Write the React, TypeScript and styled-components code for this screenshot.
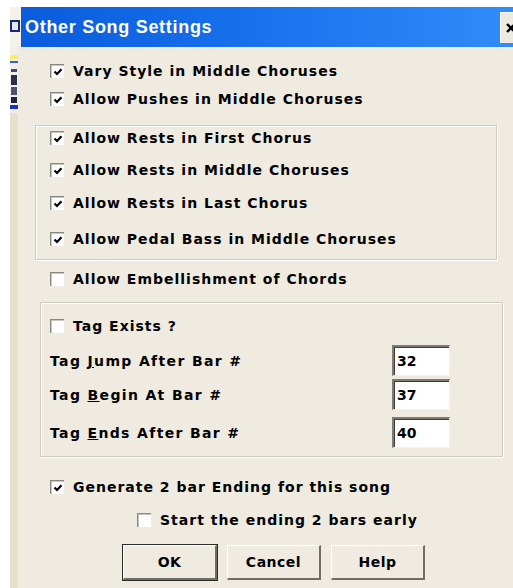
import React from "react";
import styled, { createGlobalStyle } from "styled-components";

const Global = createGlobalStyle`
  html, body {
    margin: 0;
    padding: 0;
    background: #ffffff;
    overflow: hidden;
  }
  body {
    width: 513px;
    height: 588px;
  }
`;

const Window = styled.div`
  margin: 7px 0 0 10px;
  width: 520px;
  height: 581px;
  display: flex;
  flex-direction: column;
  font-family: "DejaVu Sans", "Liberation Sans", Arial, sans-serif;
  color: #000;
`;

const TitleRow = styled.div`
  display: flex;
  height: 40px;
  flex-shrink: 0;
`;

const AppSliver = styled.div`
  width: 11px;
  background: #f3f1ea;
  display: flex;
  align-items: center;
`;

const Caption = styled.div`
  width: 473px;
  padding-left: 4px;
  background: linear-gradient(90deg, #0a5cdb 0%, #1670ec 45%, #2f8afa 100%);
  color: #fff;
  font-family: "Liberation Sans", Arial, sans-serif;
  font-weight: bold;
  font-size: 18px;
  display: flex;
  align-items: center;
  letter-spacing: 0.7px;
`;

const CloseCell = styled.div`
  flex: 1;
  background: #2f8afa;
  display: flex;
  align-items: center;
  padding-left: 2px;
`;

const CloseBox = styled.div`
  width: 24px;
  height: 30px;
  background: #ece9de;
  border-left: 1px solid #ffffff;
  border-top: 1px solid #ffffff;
  display: flex;
  align-items: center;
  padding-left: 4px;
`;

const Body = styled.div`
  flex: 1;
  display: flex;
`;

const LeftEdge = styled.div`
  width: 8px;
  background: #e7e0ca;
  display: flex;
  flex-direction: column;
`;

const Content = styled.div`
  flex: 1;
  background: #efebe1;
  display: flex;
  flex-direction: column;
  font-size: 14px;
  font-weight: bold;
  letter-spacing: 1px;
`;

const CheckRow = styled.label<{ $top: number; $left?: number }>`
  display: flex;
  align-items: center;
  height: 22px;
  margin-top: ${(p) => p.$top}px;
  margin-left: ${(p) => p.$left ?? 0}px;
  gap: 9px;
  white-space: nowrap;
`;

const Box = styled.span`
  width: 14px;
  height: 14px;
  box-sizing: border-box;
  background: #ffffff;
  border-top: 1px solid #8a877c;
  border-left: 1px solid #8a877c;
  box-shadow: inset 1px 1px 0 #c9c6ba;
  display: flex;
  align-items: center;
  justify-content: center;
  flex-shrink: 0;
`;

const Group = styled.div<{ $top: number; $left: number; $width: number; $pad: string }>`
  margin-top: ${(p) => p.$top}px;
  margin-left: ${(p) => p.$left}px;
  width: ${(p) => p.$width}px;
  box-sizing: border-box;
  border: 1px solid #cfcbbd;
  box-shadow: inset 1px 1px 0 #ffffff, 1px 1px 0 #ffffff;
  padding: ${(p) => p.$pad};
  display: flex;
  flex-direction: column;
`;

const FieldRow = styled.div<{ $top: number }>`
  display: grid;
  grid-template-columns: 342px 58px;
  align-items: center;
  height: 31px;
  margin-top: ${(p) => p.$top}px;
`;

const FieldLabel = styled.span`
  letter-spacing: 1.35px;
  white-space: nowrap;
`;

const Field = styled.div`
  height: 31px;
  box-sizing: border-box;
  background: #ffffff;
  border-top: 2px solid #7d7b72;
  border-left: 2px solid #7d7b72;
  border-right: 1px solid #f4f2ea;
  border-bottom: 1px solid #f4f2ea;
  box-shadow: inset 1px 1px 0 #3d3c38;
  display: flex;
  align-items: center;
  padding-left: 3px;
  font-size: 14px;
  letter-spacing: 0;
`;

const ButtonRow = styled.div`
  display: flex;
  gap: 10px;
  margin-top: 14px;
  margin-left: 105px;
`;

const Button = styled.div<{ $default?: boolean }>`
  width: 94px;
  height: 35px;
  box-sizing: border-box;
  background: #efebe1;
  display: flex;
  align-items: center;
  justify-content: center;
  font-size: 14px;
  font-weight: bold;
  letter-spacing: 0.5px;
  border-top: 1px solid #ffffff;
  border-left: 1px solid #ffffff;
  border-right: 2px solid #6f6d66;
  border-bottom: 2px solid #6f6d66;
  box-shadow: ${(p) => (p.$default ? "0 0 0 1px #2a2a2a" : "none")};
`;

const Key = styled.span`
  text-decoration: underline;
`;

const Check = () => (
  <svg width="10" height="10" viewBox="0 0 10 10">
    <path d="M1.5 4.5 L4 7 L8.5 2.2" fill="none" stroke="#000" strokeWidth="2.2" />
  </svg>
);

const CheckBox = ({ on }: { on?: boolean }) => <Box>{on ? <Check /> : null}</Box>;

const Option = ({
  on,
  top,
  left,
  children,
}: {
  on?: boolean;
  top: number;
  left?: number;
  children: React.ReactNode;
}) => (
  <CheckRow $top={top} $left={left}>
    <CheckBox on={on} />
    <span>{children}</span>
  </CheckRow>
);

export default function App() {
  return (
    <>
      <Global />
      <Window>
        <TitleRow>
          <AppSliver>
            <svg width="10" height="14" viewBox="0 0 10 14">
              <rect x="1" y="1" width="8" height="10" fill="#dfe6f5" stroke="#1b2a6b" strokeWidth="2" />
            </svg>
          </AppSliver>
          <Caption>Other Song Settings</Caption>
          <CloseCell>
            <CloseBox>
              <svg width="12" height="12" viewBox="0 0 12 12">
                <path d="M2 2 L10 10 M10 2 L2 10" stroke="#000" strokeWidth="2.4" />
              </svg>
            </CloseBox>
          </CloseCell>
        </TitleRow>
        <Body>
          <LeftEdge>
            <svg width="8" height="66" viewBox="0 0 8 66">
              <rect x="0" y="0" width="8" height="66" fill="#f1efe6" />
              <rect x="0" y="8" width="8" height="4" fill="#f4ee6a" />
              <rect x="0" y="14" width="8" height="2" fill="#3b5fd0" />
              <rect x="1" y="22" width="6" height="3" fill="#3a4a7a" />
              <rect x="1" y="28" width="6" height="10" fill="#27304e" />
              <rect x="1" y="40" width="6" height="8" fill="#4a5370" />
              <rect x="1" y="50" width="6" height="6" fill="#1d2340" />
              <rect x="0" y="58" width="8" height="4" fill="#1432c8" />
            </svg>
          </LeftEdge>
          <Content>
            <Option on top={13} left={32}>Vary Style in Middle Choruses</Option>
            <Option on top={6} left={32}>Allow Pushes in Middle Choruses</Option>

            <Group $top={15} $left={17} $width={462} $pad="1px 0 9px 14px">
              <Option on top={0}>Allow Rests in First Chorus</Option>
              <Option on top={10}>Allow Rests in Middle Choruses</Option>
              <Option on top={11}>Allow Rests in Last Chorus</Option>
              <Option on top={14}>Allow Pedal Bass in Middle Choruses</Option>
            </Group>

            <Option top={8} left={32}>Allow Embellishment of Chords</Option>

            <Group $top={12} $left={22} $width={463} $pad="12px 0 8px 9px">
              <Option top={0}>Tag Exists ?</Option>
              <FieldRow $top={8}>
                <FieldLabel>
                  Tag <Key>J</Key>ump After Bar #
                </FieldLabel>
                <Field>32</Field>
              </FieldRow>
              <FieldRow $top={3}>
                <FieldLabel>
                  Tag <Key>B</Key>egin At Bar #
                </FieldLabel>
                <Field>37</Field>
              </FieldRow>
              <FieldRow $top={7}>
                <FieldLabel>
                  Tag <Key>E</Key>nds After Bar #
                </FieldLabel>
                <Field>40</Field>
              </FieldRow>
            </Group>

            <Option on top={19} left={32}>Generate 2 bar Ending for this song</Option>
            <Option top={11} left={119}>Start the ending 2 bars early</Option>

            <ButtonRow>
              <Button $default>OK</Button>
              <Button>Cancel</Button>
              <Button>Help</Button>
            </ButtonRow>
          </Content>
        </Body>
      </Window>
    </>
  );
}
